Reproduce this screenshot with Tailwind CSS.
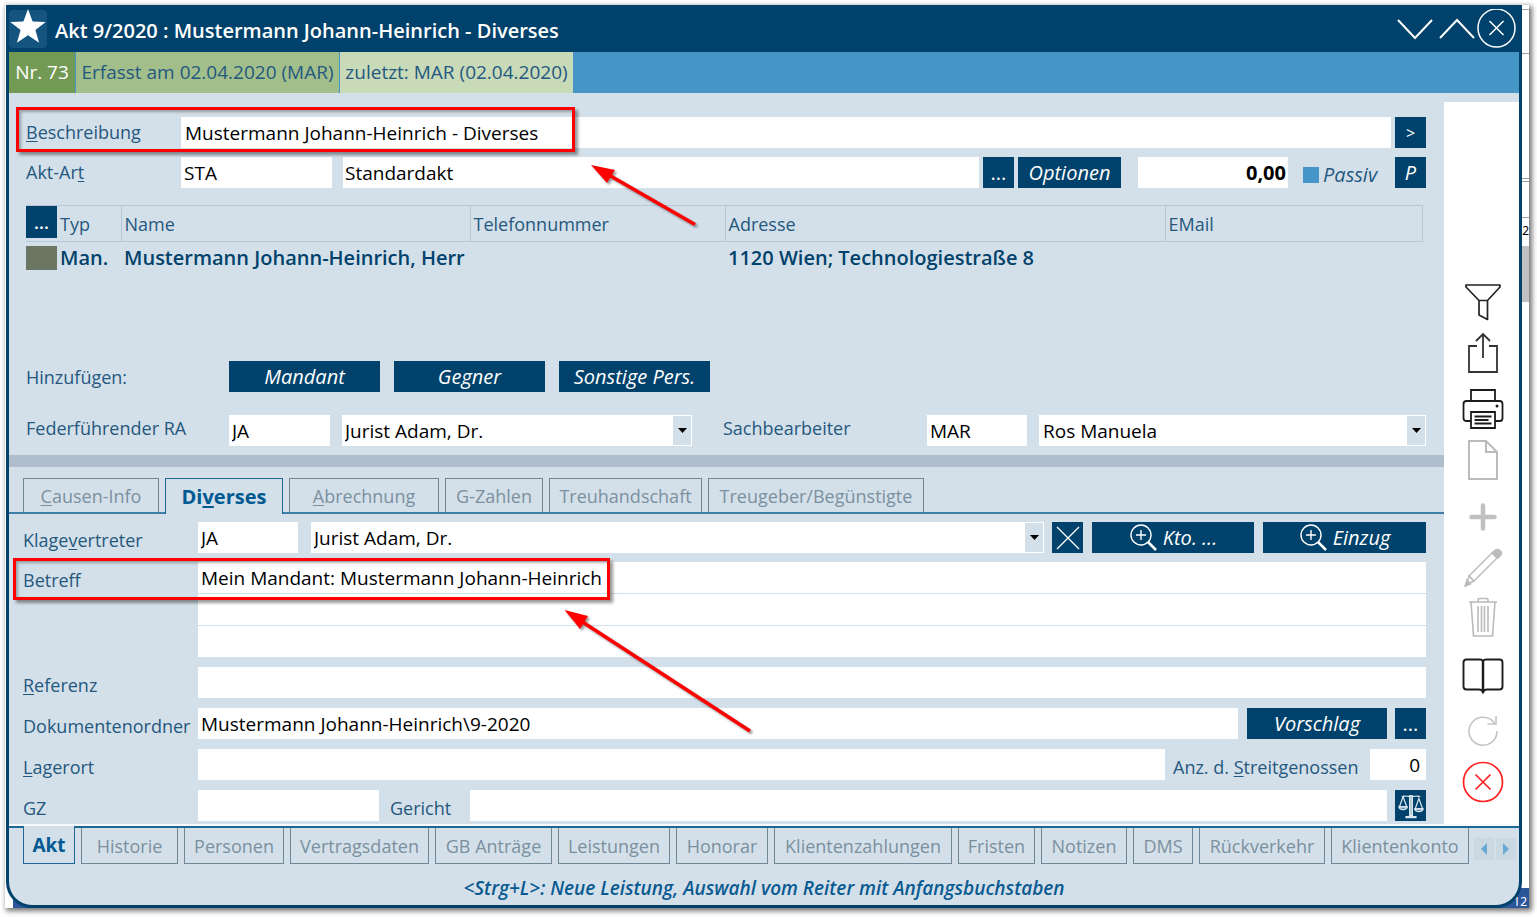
<!DOCTYPE html>
<html lang="de">
<head>
<meta charset="utf-8">
<title>Akt 9/2020 : Mustermann Johann-Heinrich - Diverses</title>
<script src="https://cdn.jsdelivr.net/npm/@tailwindcss/browser@4"></script>
</head>
<body class="bg-white font-['Open_Sans',sans-serif] text-lg leading-6 text-[#24587f]">
<div class="relative min-h-screen pt-[5px] pr-2 pb-[9px] pl-[5px]">
  <div class="relative bg-white pr-[7px] pl-px shadow-[2px_2px_5px_1px_rgba(0,0,0,0.55)]">

    <!-- Desktop area visible behind the window -->
    <div class="absolute inset-y-0 right-0 w-9 overflow-hidden text-sm text-black" aria-hidden="true">
      <div class="absolute top-1 right-0 h-px w-2 bg-gray-400"></div>
      <div class="absolute top-12 right-0 h-px w-2 bg-gray-400"></div>
      <div class="absolute top-[173px] right-0 h-1 w-2 border-y border-gray-400"></div>
      <div class="absolute top-[212px] right-0 h-px w-2 bg-gray-400"></div>
      <div class="absolute top-[214px] right-0 font-['Noto_Sans',sans-serif] text-xs leading-6">2</div>
      <div class="absolute top-[241px] right-0 h-14 w-2 bg-[#c0c0c0]"></div>
    </div>
    <div class="absolute right-0 bottom-0 left-2 h-5 bg-[#2b579a]" aria-hidden="true">
      <div class="absolute right-0.5 -bottom-1 font-['Noto_Sans',sans-serif] text-xs leading-5 text-white">12</div>
    </div>

    <div class="relative overflow-hidden rounded-b-[26px] border-x-[3px] border-b-[3px] border-[#00426b] bg-[#d4e0e9]">

      <!-- Title bar -->
      <header class="flex h-[47px] items-center bg-[#00426b] text-white">
        <span class="flex h-[38px] w-[38px] items-center justify-center rounded bg-[#14547f] pb-1">
          <svg class="h-9 w-9" viewBox="0 0 36 36" fill="#fff"><path d="M18 0l4.600 12.400 13.200.500-10.400 8.100 3.700 12.800L18 26.300 6.900 33.800l3.700-12.800L.2 12.900l13.200-.5z"/></svg>
        </span>
        <h1 class="ml-2 flex-1 pt-1 text-xl font-semibold">Akt 9/2020 : Mustermann Johann-Heinrich - Diverses</h1>
        <button type="button" aria-label="Weiter" class="h-10 w-9"><svg class="h-10 w-9" viewBox="0 0 36 40" fill="none" stroke="#fff" stroke-width="2"><path d="M1 11l17 18 17-18"/></svg></button>
        <button type="button" aria-label="Zurück" class="ml-1.5 h-10 w-9"><svg class="h-10 w-9" viewBox="0 0 36 40" fill="none" stroke="#fff" stroke-width="2"><path d="M1 29l17-18 17 18"/></svg></button>
        <button type="button" aria-label="Schließen" class="mr-0.5 ml-0.5 h-10 w-10 pb-0.5"><svg class="h-10 w-10" viewBox="0 0 40 40" fill="none" stroke="#fff" stroke-width="1.500"><ellipse cx="19.500" cy="19" rx="18.500" ry="19"/><path d="M12.500 12l14 14M26.500 12l-14 14"/></svg></button>
      </header>

      <!-- Record information -->
      <div class="flex h-[41px] gap-px bg-[#4595c6] text-[19px] leading-[41px]">
        <span class="w-[66px] bg-[#739a55] text-center text-white">Nr. 73</span>
        <span class="w-[263px] bg-[#a2bf8b] text-center">Erfasst am 02.04.2020 (MAR)</span>
        <span class="w-[233px] bg-[#c9dab9] text-center">zuletzt: MAR (02.04.2020)</span>
      </div>

      <div class="flex">
        <main class="min-w-0 flex-1">
          <section class="flex flex-col pt-6 pr-[18px] pb-[9px] pl-[17px]">
            <div class="flex items-center">
              <label for="beschreibung" class="w-[155px] pb-0.5"><u class="underline-offset-2">B</u>eschreibung</label>
              <input id="beschreibung" value="Mustermann Johann-Heinrich - Diverses" class="h-[31px] min-w-0 flex-1 bg-white px-1 text-[19px] text-black">
              <button type="button" class="ml-1 h-[31px] w-[31px] bg-[#00426b] text-base text-white">&gt;</button>
            </div>
            <div class="mt-[9px] flex items-center">
              <label for="aktart" class="w-[155px] pb-0.5">Akt-Ar<u class="underline-offset-2">t</u></label>
              <input id="aktart" value="STA" class="h-[31px] w-[151px] bg-white px-[3px] text-[19px] text-black">
              <input aria-label="Akt-Art Bezeichnung" value="Standardakt" class="ml-[11px] h-[31px] min-w-0 flex-1 bg-white px-0.5 text-[19px] text-black">
              <button type="button" class="ml-1 h-[31px] w-[31px] bg-[#00426b] text-xl text-white">...</button>
              <button type="button" class="ml-1 h-[31px] w-[103px] bg-[#00426b] text-xl text-white italic">Optionen</button>
              <input aria-label="Betrag" value="0,00" class="ml-[17px] h-[31px] w-[150px] bg-white px-0.5 text-right text-xl font-bold text-black">
              <label class="flex w-[107px] items-center gap-1 pt-1 pl-[15px] text-xl leading-6 italic"><input type="checkbox" class="h-4 w-4 appearance-none bg-[#4595c6]">Passiv</label>
              <button type="button" class="h-[31px] w-[31px] bg-[#00426b] text-xl text-white italic">P</button>
            </div>

            <div class="mt-[17px] mr-[3px] h-[156px]">
              <table class="w-full table-fixed border-collapse">
                <colgroup><col class="w-[31px]"><col class="w-16"><col class="w-[349px]"><col class="w-[255px]"><col class="w-[440px]"><col></colgroup>
                <thead>
                  <tr class="h-9 border-y border-r border-[#b4c8d7] text-left">
                    <th class="p-0 align-top"><button type="button" class="block h-8 w-[31px] bg-[#00426b] font-semibold text-white">...</button></th>
                    <th class="px-[3px] font-normal">Typ</th>
                    <th class="border-l border-[#b4c8d7] px-[3px] font-normal">Name</th>
                    <th class="border-l border-[#b4c8d7] px-[3px] font-normal">Telefonnummer</th>
                    <th class="border-l border-[#b4c8d7] px-[3px] font-normal">Adresse</th>
                    <th class="border-l border-[#b4c8d7] px-[3px] font-normal">EMail</th>
                  </tr>
                </thead>
                <tbody>
                  <tr class="h-8 text-xl font-semibold whitespace-nowrap text-[#00426b]">
                    <td class="p-0"><span class="block h-6 w-[31px] bg-[#6b7763]"></span></td>
                    <td class="px-[3px]">Man.</td>
                    <td class="px-[3px]">Mustermann Johann-Heinrich, Herr</td>
                    <td></td>
                    <td class="px-[3px]">1120 Wien; Technologiestraße 8</td>
                    <td></td>
                  </tr>
                </tbody>
              </table>
            </div>

            <div class="flex items-center">
              <span class="w-[203px]">Hinzufügen:</span>
              <div class="flex gap-[14px] text-xl text-white italic">
                <button type="button" class="h-[31px] w-[151px] bg-[#00426b]">Mandant</button>
                <button type="button" class="h-[31px] w-[151px] bg-[#00426b]">Gegner</button>
                <button type="button" class="h-[31px] w-[151px] bg-[#00426b]">Sonstige Pers.</button>
              </div>
            </div>
            <div class="mt-[23px] flex items-center">
              <label for="ra" class="w-[203px] pb-1.5">Federführender RA</label>
              <input id="ra" value="JA" class="h-[31px] w-[101px] bg-white px-[3px] text-[19px] text-black">
              <div class="relative ml-3 w-[350px]">
                <select aria-label="Federführender RA Name" class="block h-[31px] w-full appearance-none bg-white px-[3px] text-[19px] text-black"><option>Jurist Adam, Dr.</option></select>
                <span class="pointer-events-none absolute inset-y-px right-px flex w-[18px] items-center justify-center bg-[#d4e0e9]"><svg class="h-[5px] w-[9px]" viewBox="0 0 9 5"><path d="M0 0h9L4.500 5z"/></svg></span>
              </div>
              <label for="sb" class="ml-[31px] w-[204px] pb-1.5">Sachbearbeiter</label>
              <input id="sb" value="MAR" class="h-[31px] w-[100px] bg-white px-[3px] text-[19px] text-black">
              <div class="relative ml-3 min-w-0 flex-1">
                <select aria-label="Sachbearbeiter Name" class="block h-[31px] w-full appearance-none bg-white px-1 text-[19px] text-black"><option>Ros Manuela</option></select>
                <span class="pointer-events-none absolute inset-y-px right-px flex w-[18px] items-center justify-center bg-[#d4e0e9]"><svg class="h-[5px] w-[9px]" viewBox="0 0 9 5"><path d="M0 0h9L4.500 5z"/></svg></span>
              </div>
            </div>
          </section>

          <div class="h-3 bg-[#afbecc]"></div>

          <!-- Detail tabs -->
          <nav class="flex h-[47px] items-end gap-[6px] border-b-2 border-[#3d7fa6] pt-[11px] pl-[14px] text-[#7b909f]">
            <button type="button" class="h-[34px] w-[136px] border-x border-t border-[#6f8796]"><u class="underline-offset-2">C</u>ausen-Info</button>
            <button type="button" class="-mb-0.5 h-9 w-[118px] border-x border-t border-[#1c6794] bg-[#d4e0e9] text-xl font-bold text-[#005a92]">Di<u class="underline-offset-2">v</u>erses</button>
            <button type="button" class="h-[34px] w-[150px] border-x border-t border-[#6f8796]"><u class="underline-offset-2">A</u>brechnung</button>
            <button type="button" class="h-[34px] w-[98px] border-x border-t border-[#6f8796]">G-Zahlen</button>
            <button type="button" class="h-[34px] w-[153px] border-x border-t border-[#6f8796]">Treuhandschaft</button>
            <button type="button" class="h-[34px] w-[216px] border-x border-t border-[#6f8796]">Treugeber/Begünstigte</button>
          </nav>

          <section class="flex flex-col gap-[9px] pt-2 pr-[18px] pb-[3px] pl-[14px]">
            <div class="flex items-center">
              <label for="kv" class="w-[175px] pt-1">Klage<u class="underline-offset-2">v</u>ertreter</label>
              <input id="kv" value="JA" class="h-[31px] w-[100px] bg-white px-[3px] text-[19px] text-black">
              <div class="relative ml-[13px] min-w-0 flex-1">
                <select aria-label="Klagevertreter Name" class="block h-[31px] w-full appearance-none bg-white px-[3px] text-[19px] text-black"><option>Jurist Adam, Dr.</option></select>
                <span class="pointer-events-none absolute inset-y-px right-px flex w-[18px] items-center justify-center bg-[#d4e0e9]"><svg class="h-[5px] w-[9px]" viewBox="0 0 9 5"><path d="M0 0h9L4.500 5z"/></svg></span>
              </div>
              <button type="button" aria-label="Entfernen" class="ml-2 flex h-[31px] w-[31px] items-center justify-center bg-[#00426b]"><svg class="h-6 w-6" viewBox="0 0 24 24" stroke="#fff" stroke-width="1.300"><path d="M1 1l22 22M23 1L1 23"/></svg></button>
              <button type="button" class="ml-[9px] flex h-[31px] w-[162px] items-center justify-center gap-1.5 bg-[#00426b] text-xl text-white italic"><svg class="h-7 w-7" viewBox="0 0 28 28" fill="none" stroke="#fff" stroke-width="1.400"><circle cx="12" cy="11" r="10"/><path d="M12 6v10M7 11h10"/><path d="M19 18l8 8" stroke-width="2.500"/></svg>Kto. ...</button>
              <button type="button" class="ml-[9px] flex h-[31px] w-[163px] items-center justify-center gap-1.5 bg-[#00426b] text-xl text-white italic"><svg class="h-7 w-7" viewBox="0 0 28 28" fill="none" stroke="#fff" stroke-width="1.400"><circle cx="12" cy="11" r="10"/><path d="M12 6v10M7 11h10"/><path d="M19 18l8 8" stroke-width="2.500"/></svg>Einzug</button>
            </div>
            <div class="flex items-start">
              <label for="betreff" class="w-[175px] pt-1.5">Betreff</label>
              <textarea id="betreff" rows="3" class="block h-24 min-w-0 flex-1 resize-none overflow-hidden bg-[repeating-linear-gradient(to_bottom,white_0px,white_31px,#d4e0e9_31px,#d4e0e9_32px)] px-[3px] text-[19px] leading-8 text-black">Mein Mandant: Mustermann Johann-Heinrich</textarea>
            </div>
            <div class="flex items-center">
              <label for="referenz" class="w-[175px] pt-1"><u class="underline-offset-2">R</u>eferenz</label>
              <input id="referenz" class="h-[31px] min-w-0 flex-1 bg-white px-[3px] text-[19px] text-black">
            </div>
            <div class="mt-px flex items-center">
              <label for="ordner" class="w-[175px] pt-1">Dokumentenordner</label>
              <input id="ordner" value="Mustermann Johann-Heinrich\9-2020" class="h-[31px] min-w-0 flex-1 bg-white px-[3px] text-[19px] text-black">
              <button type="button" class="ml-[9px] h-[31px] w-[140px] bg-[#00426b] text-xl text-white italic">Vorschlag</button>
              <button type="button" class="ml-2 h-[31px] w-[31px] bg-[#00426b] text-xl text-white">...</button>
            </div>
            <div class="mt-px flex items-center">
              <label for="lagerort" class="w-[175px] pt-1"><u class="underline-offset-2">L</u>agerort</label>
              <input id="lagerort" class="h-[31px] min-w-0 flex-1 bg-white px-[3px] text-[19px] text-black">
              <label for="anz" class="w-[205px] pt-1 pl-2">Anz. d. <u class="underline-offset-2">S</u>treitgenossen</label>
              <input id="anz" value="0" class="h-[31px] w-14 bg-white px-1.5 text-right text-[19px] text-black">
            </div>
            <div class="mt-px flex items-center">
              <label for="gz" class="w-[175px] pt-1">GZ</label>
              <input id="gz" class="h-[31px] w-[181px] bg-white px-[3px] text-[19px] text-black">
              <label for="gericht" class="w-[91px] pt-1 pl-[11px]">Gericht</label>
              <input id="gericht" class="h-[31px] min-w-0 flex-1 bg-white px-[3px] text-[19px] text-black">
              <button type="button" aria-label="Gericht suchen" class="ml-2 flex h-[31px] w-[31px] items-center justify-center bg-[#00426b]">
                <svg class="h-[26px] w-[26px]" viewBox="0 0 28 28" fill="none" stroke="#dbe7ef" stroke-width="1.300"><path d="M12.500 3v21h3V3z" fill="#a9c0d0"/><path d="M4 4c4-2 7 1 10-1 3 2 6-1 10 1"/><path d="M5.500 4L1.500 15h8zM22.500 6l-4 11h8z"/><path d="M1 15c1 4 8 4 9 0zM18 17c1 4 8 4 9 0z" fill="#dbe7ef" fill-opacity=".4"/><path d="M8 26h12" stroke-width="2.500"/></svg>
              </button>
            </div>
          </section>
        </main>

        <!-- Tool column -->
        <aside class="mt-[9px] flex w-[75px] flex-col items-center bg-white pt-[180px] pl-0.5">
          <button type="button" aria-label="Filter" class="h-10 w-11"><svg class="h-10 w-11" viewBox="0 0 44 40" fill="none" stroke="#222" stroke-width="1.700" stroke-linejoin="round"><path d="M5 3h34v2L26.500 18.500v19L18 33V18.500L5 5zM18 18.500h8.500"/></svg></button>
          <button type="button" aria-label="Teilen" class="mt-[9px] h-11 w-11"><svg class="h-11 w-11" viewBox="0 0 44 44" fill="none" stroke="#333" stroke-width="1.800"><path d="M16 15H8v26h28V15h-8M22 27V4M15 10l7-7 7 7"/></svg></button>
          <button type="button" aria-label="Drucken" class="mt-3 h-11 w-11"><svg class="h-11 w-11" viewBox="0 0 44 44" fill="none" stroke="#1c1c1c" stroke-width="1.800"><path d="M10 14V3h24v11M10 34H5q-2.500 0-2.500-3V17q0-3 3-3h33q3 0 3 3v14q0 3-2.500 3h-5"/><path d="M10 25h24v16H10zM13.500 29.500h17M13.500 33h14M13.500 36.500h17"/><circle cx="36" cy="19" r="1.500" fill="#1c1c1c" stroke="none"/></svg></button>
          <button type="button" aria-label="Neu" class="mt-2 h-11 w-11"><svg class="h-11 w-11" viewBox="0 0 44 44" fill="none" stroke="#bbb" stroke-width="2"><path d="M8 2h17l11 11v27H8zM25 2v11h11"/></svg></button>
          <button type="button" aria-label="Hinzufügen" class="mt-3 h-11 w-11"><svg class="h-11 w-11" viewBox="0 0 44 44" stroke="#c0c0c0" stroke-width="4.500" stroke-linecap="round"><path d="M22 10.500v23M10.500 22h23"/></svg></button>
          <button type="button" aria-label="Bearbeiten" class="mt-1.5 h-11 w-11"><svg class="h-11 w-11" viewBox="0 0 44 44" fill="none" stroke="#bbb" stroke-width="1.400"><path d="M8 31L31 8l5 5-23 23z"/><path d="M33 6q3-3 6-.5t0 5.500l-2 2-6-5z" fill="#bbb"/><path d="M8 31l-3 9 8-4z"/><path d="M6 35l-2 6 5.500-2z" fill="#bbb"/></svg></button>
          <button type="button" aria-label="Löschen" class="mt-1.5 h-11 w-11"><svg class="h-11 w-11" viewBox="0 0 44 44" fill="none" stroke="#bbb" stroke-width="1.600"><path d="M8 7h28M10 7l2.500 34h19L34 7M17 7V5q0-1.500 2-1.500h6q2 0 2 1.500v2"/><path d="M17 11v26M20.500 11v26M23.500 11v26M27 11v26"/></svg></button>
          <button type="button" aria-label="Nachschlagen" class="mt-3.5 h-11 w-11"><svg class="h-11 w-11" viewBox="0 0 44 44" fill="none" stroke="#1c1c1c" stroke-width="1.900"><path d="M22 8q-1-1.500-3-1.500H5.500q-3 0-3 3v24q0 3 3 3H18q3 0 4 2.500 1-2.500 4-2.500h12.500q3 0 3-3v-24q0-3-3-3H25q-2 0-3 1.500z"/><path d="M22 7v33" stroke-width="2.500"/></svg></button>
          <button type="button" aria-label="Aktualisieren" class="mt-3 h-11 w-11"><svg class="h-11 w-11" viewBox="0 0 44 44" fill="none" stroke="#c4c4c4" stroke-width="1.600"><path d="M36 22A14 14 0 1 1 34 15M26.500 15H35V7"/></svg></button>
          <button type="button" aria-label="Abbrechen" class="mt-[7px] h-11 w-11"><svg class="h-11 w-11" viewBox="0 0 44 44" fill="none" stroke="#ff2020" stroke-width="1.700"><circle cx="22" cy="22" r="19.500"/><path d="M14.500 14.500l15 15M29.500 14.500l-15 15"/></svg></button>
        </aside>
      </div>

      <!-- Record tabs -->
      <footer class="border-t-2 border-white/80">
        <nav class="flex h-9 items-start gap-[6px] border-t-2 border-[#1c6794] pl-[14px] text-[#7b909f]">
          <button type="button" class="-mt-0.5 h-[38px] w-[52px] shrink-0 border-x border-b border-[#1c6794] bg-[#d4e0e9] text-[19px] font-bold text-[#005a92]">Akt</button>
          <button type="button" class="h-9 w-[97px] shrink-0 border-x border-b border-[#6f8796]">Historie</button>
          <button type="button" class="h-9 w-[100px] shrink-0 border-x border-b border-[#6f8796]">Personen</button>
          <button type="button" class="h-9 w-[139px] shrink-0 border-x border-b border-[#6f8796]">Vertragsdaten</button>
          <button type="button" class="h-9 w-[117px] shrink-0 border-x border-b border-[#6f8796]">GB Anträge</button>
          <button type="button" class="h-9 w-[112px] shrink-0 border-x border-b border-[#6f8796]">Leistungen</button>
          <button type="button" class="h-9 w-[92px] shrink-0 border-x border-b border-[#6f8796]">Honorar</button>
          <button type="button" class="h-9 w-[178px] shrink-0 border-x border-b border-[#6f8796]">Klientenzahlungen</button>
          <button type="button" class="h-9 w-[77px] shrink-0 border-x border-b border-[#6f8796]">Fristen</button>
          <button type="button" class="h-9 w-[86px] shrink-0 border-x border-b border-[#6f8796]">Notizen</button>
          <button type="button" class="h-9 w-[60px] shrink-0 border-x border-b border-[#6f8796]">DMS</button>
          <button type="button" class="h-9 w-[126px] shrink-0 border-x border-b border-[#6f8796]">Rückverkehr</button>
          <button type="button" class="h-9 w-[138px] shrink-0 border-x border-b border-[#6f8796]">Klientenkonto</button>
          <div class="mt-2.5 -ml-px flex gap-0.5">
            <button type="button" aria-label="Tabs zurück" class="flex h-[22px] w-5 items-center justify-center bg-[#cad8e2]"><svg class="h-3 w-1.5" viewBox="0 0 6 12" fill="#69a9d4"><path d="M6 0v12L0 6z"/></svg></button>
            <button type="button" aria-label="Tabs weiter" class="flex h-[22px] w-5 items-center justify-center bg-[#cad8e2]"><svg class="h-3 w-1.5" viewBox="0 0 6 12" fill="#69a9d4"><path d="M0 0v12l6-6z"/></svg></button>
          </div>
        </nav>
        <p class="pt-[14px] pb-[5px] text-center text-[19px] leading-6 font-semibold text-[#0a5a92] italic">&lt;Strg+L&gt;: Neue Leistung, Auswahl vom Reiter mit Anfangsbuchstaben</p>
      </footer>
    </div>
  </div>

  <!-- Callouts lying over the form -->
  <div class="pointer-events-none absolute top-[107px] left-4 h-[45px] w-[559px] border-[3px] border-[#fe0000] shadow-[3px_3px_3px_rgba(0,0,0,0.4),inset_2px_2px_3px_rgba(0,0,0,0.3)]"></div>
  <div class="pointer-events-none absolute top-[558px] left-[13px] h-[42px] w-[597px] border-[3px] border-[#fe0000] shadow-[3px_3px_3px_rgba(0,0,0,0.4),inset_2px_2px_3px_rgba(0,0,0,0.3)]"></div>
  <svg class="pointer-events-none absolute top-[160px] left-[588px] h-[72px] w-[116px] drop-shadow-[2px_2px_1px_rgba(0,0,0,0.4)]" viewBox="588 160 116 72" fill="#fe0000"><path d="M591 165l24 5-8 13z"/><path d="M608 174.500l87 50" stroke="#fe0000" stroke-width="3.500"/></svg>
  <svg class="pointer-events-none absolute top-[605px] left-[560px] h-[134px] w-[200px] drop-shadow-[2px_2px_1px_rgba(0,0,0,0.4)]" viewBox="560 605 200 134" fill="#fe0000"><path d="M564.500 610l23.500 6-8 13z"/><path d="M581 621l169 110" stroke="#fe0000" stroke-width="3.500"/></svg>
</div>
</body>
</html>
